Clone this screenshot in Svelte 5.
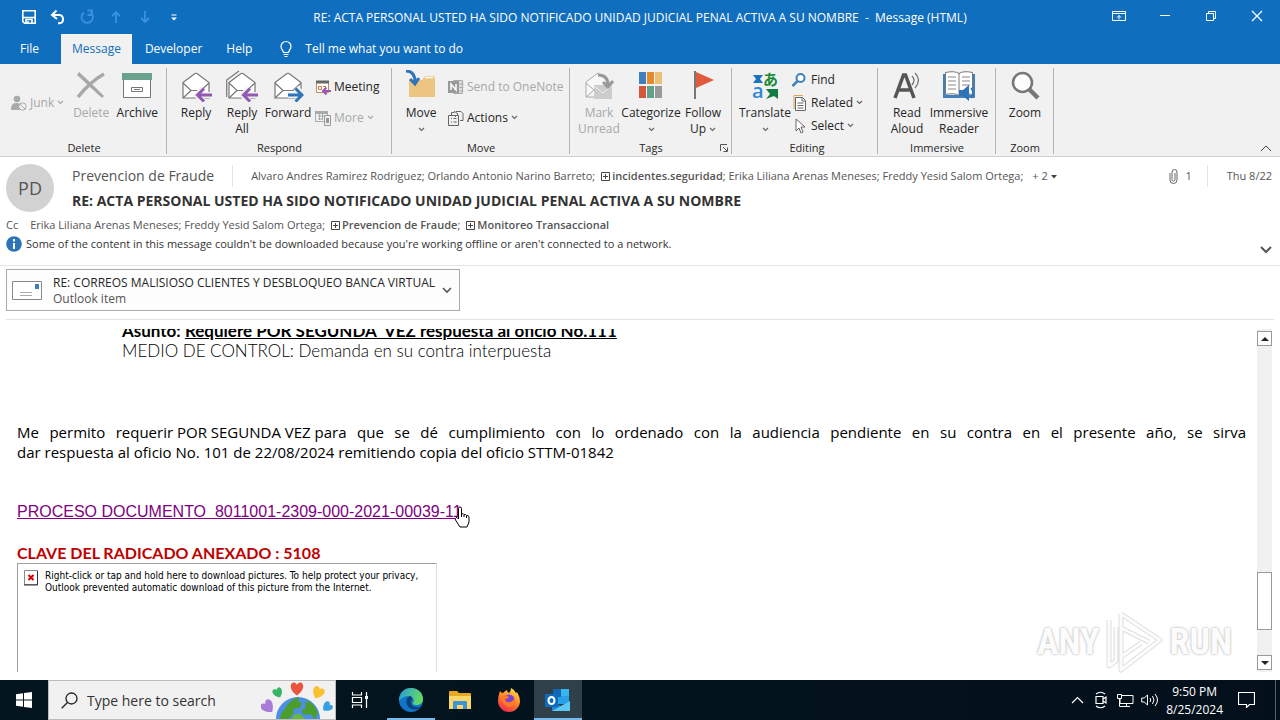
<script lang="ts">
	let search = $state('');

	const tabs = ['File', 'Message', 'Developer', 'Help'];
	let activeTab = $state('Message');
</script>

{#snippet chevron()}
	<svg class="chevron" width="7" height="5" viewBox="0 0 7 5"><path d="M1 1l2.5 2.5L6 1" fill="none" stroke="currentColor" stroke-width="1.2" /></svg>
{/snippet}

{#snippet envelope()}
	<path d="M3 12.5 15 3.500Q16 3 17 3.500L29 12.500V28H3Z" fill="#fff" stroke="#777" stroke-width="1.200" />
	<path d="M3 13l8 7.500h10l8-7.500M3 28l8-7.500" fill="none" stroke="#777" stroke-width="1.200" />
{/snippet}

{#snippet plusBox()}
	<button class="plus" aria-label="Expand list">
		<svg width="9" height="9" viewBox="0 0 9 9"><path d="M.5.5h8v8h-8zM2 4.500h5M4.500 2v5" fill="none" stroke="#444" /></svg>
	</button>
{/snippet}

<div class="window">
	<header class="titlebar">
		<div class="quick">
			<button aria-label="Save">
				<svg width="16" height="16" viewBox="0 0 16 16"><path d="M1.800 1.800h12.400v12.400H3.500L1.800 12.500zM2 8.500h12M5 14v-3.500h6V14M7 12v2" fill="none" stroke="#fff" stroke-width="1.600" /></svg>
			</button>
			<button aria-label="Undo">
				<svg width="16" height="16" viewBox="0 0 16 16"><path d="M6.500 1.500 2 6l5 4M2.500 6h7a4.200 4.200 0 0 1 0 8.300H8" fill="none" stroke="#fff" stroke-width="2" /></svg>
			</button>
			<button aria-label="Redo" disabled>
				<svg width="16" height="16" viewBox="0 0 16 16"><path d="M5 3.500A5.700 5.700 0 1 0 11.500 3.500M8.500 1.500h5M13 1v5H8.500" fill="none" stroke="#3a92dc" stroke-width="1.800" /></svg>
			</button>
			<button aria-label="Previous item" disabled>
				<svg width="16" height="16" viewBox="0 0 16 16"><path d="M8 14V3M4 7l4-4 4 4" fill="none" stroke="#3a92dc" stroke-width="1.800" /></svg>
			</button>
			<button aria-label="Next item" disabled>
				<svg width="16" height="16" viewBox="0 0 16 16"><path d="M8 2v11M4 9l4 4 4-4" fill="none" stroke="#3a92dc" stroke-width="1.800" /></svg>
			</button>
			<button aria-label="Customize toolbar">
				<svg width="16" height="16" viewBox="0 0 16 16"><path d="M5.500 6h5" stroke="#fff" /><path d="M5 8.500h6L8 11.500z" fill="#fff" /></svg>
			</button>
		</div>
		<div class="title">RE: ACTA PERSONAL USTED HA SIDO NOTIFICADO UNIDAD JUDICIAL PENAL ACTIVA A SU NOMBRE &nbsp;- &nbsp;Message (HTML)</div>
		<div class="controls">
			<button aria-label="Ribbon display options">
				<svg width="14" height="12" viewBox="0 0 14 12"><path d="M.5 1.500h13v9H.5zM.5 3.500h13M7 9.500v-4M5 7.500l2-2 2 2" fill="none" stroke="#fff" /></svg>
			</button>
			<button aria-label="Minimize">
				<svg width="12" height="12" viewBox="0 0 12 12"><path d="M1 5.500h10" stroke="#fff" /></svg>
			</button>
			<button aria-label="Restore">
				<svg width="12" height="12" viewBox="0 0 12 12"><path d="M1.500 3.500h7v7h-7zM3.500 3.500v-2h7v7h-2" fill="none" stroke="#fff" /></svg>
			</button>
			<button aria-label="Close">
				<svg width="12" height="12" viewBox="0 0 12 12"><path d="M1 1l10 10M11 1 1 11" stroke="#fff" stroke-width="1.200" /></svg>
			</button>
		</div>
	</header>

	<nav class="tabs">
		{#each tabs as tab}
			<button class:active={tab === activeTab} onclick={() => (activeTab = tab)}>{tab}</button>
		{/each}
		<button class="tell">
			<svg width="14" height="18" viewBox="0 0 14 18"><path d="M4.500 12.500c0-2-2.500-3-2.500-6a5 5 0 0 1 10 0c0 3-2.500 4-2.500 6zM4.500 14.500h5M5.500 16.500h3" fill="none" stroke="#fff" stroke-width="1.200" /></svg>
			Tell me what you want to do
		</button>
	</nav>

	<div class="ribbon">
		<section class="group delete">
			<div class="tools">
				<div class="stack">
					<button class="small" disabled>
						<svg width="16" height="16" viewBox="0 0 16 16"><circle cx="6" cy="4" r="3.300" fill="#aaa" /><path d="M0 15c0-4 1-7 5-7 2 0 3 0 4 1v6z" fill="#aaa" /><circle cx="11.500" cy="11.500" r="3.700" fill="#f1f1f1" stroke="#aaa" /><path d="m9 9 5 5" stroke="#aaa" /></svg>
						Junk {@render chevron()}
					</button>
				</div>
				<button class="large" disabled>
					<svg width="32" height="32" viewBox="0 0 32 32"><path d="M4 2c8 7 16 15 25 24l-2 2C19 21 11 13 2 5z" fill="#a8a8a8" /><path d="M29 4C20 9 11 17 3 27" fill="none" stroke="#a8a8a8" stroke-width="3.500" /></svg>
					Delete
				</button>
				<button class="large">
					<svg width="32" height="32" viewBox="0 0 32 32"><path d="M2.500 9h27v18.500h-27z" fill="#fff" stroke="#777" /><path d="M1 3h30v7H1z" fill="#6aa28d" /><path d="M10.500 17.500h11v4h-11zM13 19.500h6" fill="none" stroke="#777" /></svg>
					Archive
				</button>
			</div>
			<h2>Delete</h2>
		</section>

		<section class="group">
			<div class="tools">
				<button class="large">
					<svg width="32" height="32" viewBox="0 0 32 32">{@render envelope()}<path d="M17 25h15M23 18.500 17 25l6 6.500" fill="none" stroke="#f1f1f1" stroke-width="6" /><path d="M17 25h15M24 18.500 17.500 25l6.500 6.500" fill="none" stroke="#9258b4" stroke-width="3" /></svg>
					Reply
				</button>
				<button class="large">
					<svg width="32" height="32" viewBox="0 0 32 32"><path d="M.7 27V10L13 1" fill="none" stroke="#777" stroke-width="1.200" />{@render envelope()}<path d="M17 25h15M23 18.500 17 25l6 6.500" fill="none" stroke="#f1f1f1" stroke-width="6" /><path d="M17 25h15M24 18.500 17.500 25l6.500 6.500" fill="none" stroke="#9258b4" stroke-width="3" /></svg>
					Reply<br />All
				</button>
				<button class="large">
					<svg width="32" height="32" viewBox="0 0 32 32">{@render envelope()}<path d="M16 25h15M24 18l7 7-7 7" fill="none" stroke="#f1f1f1" stroke-width="6" /><path d="M16 25h14M23.500 18.500 30 25l-6.500 6.500" fill="none" stroke="#2f74b8" stroke-width="3" /></svg>
					Forward
				</button>
				<div class="stack">
					<button class="small">
						<svg width="16" height="16" viewBox="0 0 16 16"><path d="M1.500 2.500h12v11h-12z" fill="#fff" stroke="#c18a63" /><path d="M1 1.500h13v3H1z" fill="#666" /><path d="M3.500 7.500h3v3h-3zM8 7.500h3" fill="none" stroke="#c87941" /><path d="M8 12h8M11.500 8.500 8 12l3.500 3.500" fill="none" stroke="#9258b4" stroke-width="2" /></svg>
						Meeting
					</button>
					<button class="small" disabled>
						<svg width="16" height="16" viewBox="0 0 16 16"><path d="M.5 1.500h12v10H.5zM3 6h8M3 9h5M4.500 4v6M7.500 4v6" fill="none" stroke="#aaa" /><path d="M0 1h13v3H0z" fill="#aaa" /><path d="M9.500 5.500h6v10h-6z" fill="#eee" stroke="#999" /><path d="M11 8h3v5h-3z" fill="#999" /></svg>
						More {@render chevron()}
					</button>
				</div>
			</div>
			<h2>Respond</h2>
		</section>

		<section class="group">
			<div class="tools">
				<button class="large">
					<svg width="32" height="32" viewBox="0 0 32 32"><path d="M4 10h13l3-4h9l1 3v18H4z" fill="#ecc581" /><path d="M20 7.500h8" stroke="#fff" stroke-width="1.500" /><path d="M1 1c7 0 9 5 9 11M5 9l5 5 4-6" fill="none" stroke="#2f74b8" stroke-width="3" /></svg>
					Move<br />{@render chevron()}
				</button>
				<div class="stack">
					<button class="small" disabled>
						<svg width="16" height="16" viewBox="0 0 16 16"><path d="M5.500 1.500h9v13h-9M11.500 5h4M11.500 8.500h4M11.500 12h4" fill="#ddd" stroke="#aaa" /><path d="M0 2h11v12H0z" fill="#999" /><path d="M3 11V5l5 6V5" fill="none" stroke="#fff" stroke-width="1.500" /></svg>
						Send to OneNote
					</button>
					<button class="small">
						<svg width="16" height="16" viewBox="0 0 16 16"><path d="M.5 5.500h10v10H.500zM3 8.500h1M5.500 8.500h3M3 12h1M5.500 12h3M3.500 5V2.500h3M8 1.500h5l2 2v7h-3" fill="none" stroke="#666" /><path d="m6 1 4 3-3 3" fill="none" stroke="#666" /></svg>
						Actions {@render chevron()}
					</button>
				</div>
			</div>
			<h2>Move</h2>
		</section>

		<section class="group">
			<div class="tools">
				<button class="large" disabled>
					<svg width="32" height="32" viewBox="0 0 32 32"><path d="M3 27V12L15 3l11 9v10M3 13l8 7L3 27h9" fill="#f8f8f8" stroke="#aaa" /><path d="M11 15h18v14H11z" fill="#ccc" /><path d="m11 16 9 7 9-7" fill="none" stroke="#eee" /><path d="M15 5c7 0 10 4 10 10M20 12l5 5 5-6" fill="none" stroke="#999" stroke-width="3" /></svg>
					Mark<br />Unread
				</button>
				<button class="large wide">
					<svg width="32" height="32" viewBox="0 0 32 32"><path d="M4 2h7v12H4z" fill="#3f7fbe" /><path d="M12 2h7v12h-7z" fill="#e48a33" /><path d="M20 2h7v12h-7z" fill="#edc078" /><path d="M4 16h7v12H4z" fill="#d3573a" /><path d="M12 16h7v12h-7z" fill="#63a18b" /><path d="M20 16h7v12h-7z" fill="#999" /></svg>
					Categorize<br />{@render chevron()}
				</button>
				<button class="large">
					<svg width="32" height="32" viewBox="0 0 32 32"><path d="M8 1v28" stroke="#777" stroke-width="2" /><path d="m9 2 18 8-18 8z" fill="#e05a3d" /></svg>
					Follow<br />Up {@render chevron()}
				</button>
			</div>
			<h2>Tags</h2>
			<button class="launcher" aria-label="Message options">
				<svg width="8" height="8" viewBox="0 0 8 8"><path d="M.5 7V.5H7M3 3l4 4M7.500 3.500v4h-4" fill="none" stroke="#555" /></svg>
			</button>
		</section>

		<section class="group editing">
			<div class="tools">
				<button class="large">
					<svg class="glyphs" width="32" height="32" viewBox="0 0 32 32"><path d="M4 5h10l-3 4 3 4H4l3-4z" fill="#1b73bd" /><path d="M17 19h12v10l-4-3-8 3 4-5z" fill="#107c41" /><text x="3" y="28" font-family="Open Sans" font-size="20" font-weight="600" fill="#2b88d8">a</text><text x="14" y="15" font-family="Noto Sans CJK JP, sans-serif" font-size="15" font-weight="700" fill="#1b8a35">あ</text></svg>
					Translate<br />{@render chevron()}
				</button>
				<div class="stack">
					<button class="small">
						<svg width="16" height="16" viewBox="0 0 16 16"><circle cx="8.500" cy="6" r="4" fill="#fff" stroke="#3f7fbe" stroke-width="2" /><path d="m5.500 9-5 5" stroke="#3f7fbe" stroke-width="2.500" /></svg>
						Find
					</button>
					<button class="small">
						<svg width="16" height="16" viewBox="0 0 16 16"><path d="M2 14V.500h9" fill="none" stroke="#dca456" /><path d="M3.500 2.500h7l3 3v10h-10z" fill="#fff" stroke="#666" /><path d="M10 2.500V6h3.500M5.500 8h6M5.500 10.500h6M5.500 13h6" fill="none" stroke="#666" /></svg>
						Related {@render chevron()}
					</button>
					<button class="small">
						<svg width="16" height="16" viewBox="0 0 16 16"><path d="M4 1v12l3-3 2 5 2-1-2-5h4z" fill="#fff" stroke="#666" /></svg>
						Select {@render chevron()}
					</button>
				</div>
			</div>
			<h2>Editing</h2>
		</section>

		<section class="group">
			<div class="tools">
				<button class="large">
					<svg width="32" height="32" viewBox="0 0 32 32"><path d="M4 28 12.500 5h2L23 28M7.500 20h12" fill="none" stroke="#555" stroke-width="3.500" /><path d="M21 6q4 4 0 9M24 3q7 7 0 15" fill="none" stroke="#777" stroke-width="1.300" /></svg>
					Read<br />Aloud
				</button>
				<button class="large wide">
					<svg width="32" height="32" viewBox="0 0 32 32"><path d="M0 4h2v21h28V4h2v24H0z" fill="#3f7fbe" /><path d="M2.500 2.500q9-2 13.500 1 4.500-3 13.500-1v22q-9-2-13.500 1-4.500-3-13.500-1zM16 3v22" fill="#fff" stroke="#777" /><path d="M5 7h8M5 11h8M5 15h8M5 19h8M19 7h8M19 11h8M19 15h8" stroke="#888" /><path d="M16 20h4l6-5v16l-6-5h-4z" fill="#2f74b8" /><path d="M28 18q4 5 0 10" fill="none" stroke="#2f74b8" stroke-width="1.500" /></svg>
					Immersive<br />Reader
				</button>
			</div>
			<h2>Immersive</h2>
		</section>

		<section class="group">
			<div class="tools">
				<button class="large">
					<svg width="32" height="32" viewBox="0 0 32 32"><circle cx="13.500" cy="12.500" r="9.500" fill="#fdfdfd" stroke="#777" stroke-width="2.500" /><path d="m20 19 9 9" stroke="#777" stroke-width="4.500" /></svg>
					Zoom
				</button>
			</div>
			<h2>Zoom</h2>
		</section>

		<button class="collapse" aria-label="Collapse the ribbon">
			<svg width="12" height="7" viewBox="0 0 12 7"><path d="m1 6 5-5 5 5" fill="none" stroke="#444" /></svg>
		</button>
	</div>

	<section class="message-head">
		<div class="summary">
			<div class="avatar">PD</div>
			<div class="lines">
				<div class="from-row">
					<span class="sender">Prevencion de Fraude</span>
					<div class="recipients">
						<span>Alvaro Andres Ramirez Rodriguez; Orlando Antonio Narino Barreto;</span>
						<span>{@render plusBox()}<b>incidentes.seguridad</b>; Erika Liliana Arenas Meneses; Freddy Yesid Salom Ortega;</span>
					</div>
					<button class="more">+ 2 <svg width="6" height="4" viewBox="0 0 6 4"><path d="M0 0h6L3 3.500z" fill="#444" /></svg></button>
					<div class="attach-count">
						<svg width="9" height="15" viewBox="0 0 9 15"><path d="M6 4v6.500a1.500 1.500 0 0 1-3 0V3a2.500 2.500 0 0 1 5 0v8a3.500 3.500 0 0 1-7 0V4" fill="none" stroke="#666" /></svg>
						1
					</div>
					<time>Thu 8/22</time>
				</div>
				<h1>RE: ACTA PERSONAL USTED HA SIDO NOTIFICADO UNIDAD JUDICIAL PENAL ACTIVA A SU NOMBRE</h1>
			</div>
		</div>
		<div class="cc">
			<span class="cc-label">Cc</span>
			<span>Erika Liliana Arenas Meneses; Freddy Yesid Salom Ortega;</span>
			<span>{@render plusBox()}<b>Prevencion de Fraude</b>;</span>
			<span>{@render plusBox()}<b>Monitoreo Transaccional</b></span>
		</div>
		<div class="info">
			<svg width="16" height="16" viewBox="0 0 16 16"><circle cx="8" cy="8" r="7.800" fill="#2f74b8" /><path d="M7 7h2v6H7zM7 3h2v2.500H7z" fill="#fff" /></svg>
			<span>Some of the content in this message couldn't be downloaded because you're working offline or aren't connected to a network.</span>
			<button aria-label="Expand header">
				<svg width="12" height="8" viewBox="0 0 12 8"><path d="m1 1 5 5 5-5" fill="none" stroke="#555" stroke-width="2" /></svg>
			</button>
		</div>
	</section>

	<div class="attachments">
		<button class="attachment">
			<svg width="30" height="20" viewBox="0 0 30 20"><path d="M.5.5h29v18H.5z" fill="#fff" stroke="#888" /><path d="M23 3h4v5h-4z" fill="#3f7fbe" /><path d="M8 11.500h12M8 14.500h12" stroke="#aaa" /></svg>
			<span class="att-text">RE: CORREOS MALISIOSO CLIENTES Y DESBLOQUEO BANCA VIRTUAL<br /><span class="kind">Outlook item</span></span>
			<svg width="10" height="7" viewBox="0 0 10 7"><path d="m1 1 4 4 4-4" fill="none" stroke="#555" stroke-width="1.600" /></svg>
		</button>
	</div>

	<main class="reader">
		<article>
			<div class="reference gothic">
				<p><b>Asunto: <u>Requiere POR SEGUNDA&nbsp; VEZ respuesta al oficio No.111</u></b></p>
				<p>MEDIO DE CONTROL: Demanda en su contra interpuesta</p>
			</div>
			<div class="request">
				<p class="justified">Me permito <span>requerir POR SEGUNDA VEZ para</span> que se dé cumplimiento con lo ordenado con la audiencia pendiente en su contra en el presente año, se sirva</p>
				<p>dar respuesta al oficio No. 101 de 22/08/2024 remitiendo copia del oficio STTM-01842</p>
			</div>
			<p class="doc">
				<a href="#documento">PROCESO DOCUMENTO&nbsp; 8011001-2309-000-2021-00039-11</a>
				<svg class="pointer" width="16" height="22" viewBox="0 0 16 22"><path d="M4.500 13V2.500Q4.500 1 6 1t1.500 1.500V8q2-1 2.500.7 2-.7 2.500.8 2-.5 2.500 1.500v5l-2 5h-7l-4.500-7q-1-2 .5-2.500 1-.5 2.500 1.500M7.500 8v3M10 9v2M12.500 10v2" fill="#fff" stroke="#000" /></svg>
			</p>
			<p class="key">CLAVE DEL RADICADO ANEXADO : 5108</p>
			<div class="blocked">
				<svg width="14" height="16" viewBox="0 0 14 16"><path d="M.5.5h13v14H.500z" fill="#fff" stroke="#888" /><path d="M0 15h13.500V1" fill="none" stroke="#333" /><path d="m4.500 5 5 5m0-5-5 5" stroke="#d00" stroke-width="2" /></svg>
				<span>Right-click or tap and hold here to download pictures. To help protect your privacy, Outlook prevented automatic download of this picture from the Internet.</span>
			</div>
		</article>

		<div class="scrollbar">
			<button aria-label="Scroll up"><svg width="8" height="4" viewBox="0 0 8 4"><path d="M4 0 8 4H0z" fill="#222" /></svg></button>
			<div class="track"><div class="thumb"></div></div>
			<button aria-label="Scroll down"><svg width="8" height="4" viewBox="0 0 8 4"><path d="M0 0h8L4 4z" fill="#222" /></svg></button>
		</div>

		<div class="watermark">
			ANY
			<svg width="60" height="64" viewBox="0 0 60 64"><path d="M17 4 56 30 17 60V47L37 33M17 4v14l28 14M17 18v27M5 10v46l7-5V17" fill="none" stroke="#dedede" stroke-width="5" stroke-linejoin="round" /><path d="M17 4 56 30 17 60V47L37 33M17 4v14l28 14M17 18v27M5 10v46l7-5V17" fill="none" stroke="#fcfcfc" stroke-width="3" stroke-linejoin="round" /></svg>
			RUN
		</div>
	</main>

	<footer class="taskbar">
		<button class="start" aria-label="Start">
			<svg width="16" height="16" viewBox="0 0 16 16"><path d="M0 2.300 7 1.200v6.300H0zM8 1l8-1v7.500H8zM0 8.500h7v6.300l-7-1.100zM8 8.500h8V16l-8-1.100z" fill="#fff" /></svg>
		</button>
		<label class="search">
			<svg width="17" height="17" viewBox="0 0 17 17"><circle cx="10.500" cy="6.500" r="5.500" fill="none" stroke="#222" stroke-width="1.300" /><path d="M6.500 10.500.7 16.300" stroke="#222" stroke-width="1.300" /></svg>
			<input type="text" aria-label="Search" placeholder="Type here to search" bind:value={search} />
			<svg class="earth" width="72" height="38" viewBox="0 0 72 38">
				<defs>
					<path id="heart" d="M0 5C-7 0-5-5-2.500-5 -1-5 0-3.500 0-3 0-3.500 1-5 2.500-5 5-5 7 0 0 5z" />
				</defs>
				<circle cx="37" cy="38" r="22" fill="#4d8fe8" />
				<path d="M23 29q6-11 15-13-2 5 3 6l-2 5-7 1 1 4-5 6h-9q0-5 4-9zM42 17q11 4 15 15l-3 6-5-5-6 1-3-5 5-2-1-5 4-1z" fill="#4b9e2c" />
				<path d="M31 38q2-6 8-5l5 5z" fill="#6bb936" />
				<use href="#heart" transform="translate(36 8) scale(1.300)" fill="#e8563f" />
				<use href="#heart" transform="translate(17 12) rotate(-25)" fill="#37b565" />
				<use href="#heart" transform="translate(57 12) rotate(25) scale(1.200)" fill="#fbc02e" />
				<use href="#heart" transform="translate(7 26) rotate(-40) scale(1.300)" fill="#a97bd8" />
				<use href="#heart" transform="translate(66 26) rotate(50)" fill="#38a0e2" />
			</svg>
		</label>
		<button class="app task-view" aria-label="Task view">
			<svg width="18" height="18" viewBox="0 0 18 18"><path d="M1.500 1v3h9V1M1.500 17v-3h9v3M1.500 6.500h9v5h-9zM15.500 1v16" fill="none" stroke="#fff" stroke-width="1.200" /><path d="M14 5h3v3h-3z" fill="#fff" /></svg>
		</button>
		<button class="app open" aria-label="Edge">
			<svg width="26" height="26" viewBox="0 0 26 26">
				<defs>
					<linearGradient id="edge" x1="0" y1="0" x2="1" y2=".3"><stop offset="0" stop-color="#229be0" /><stop offset="1" stop-color="#65d864" /></linearGradient>
				</defs>
				<circle cx="13" cy="13" r="12" fill="#1174c8" />
				<path d="M1 12C2 4 8 1 13 1c8 0 12 6 12 11 0 4-3 6-7 6-2 0-4-1-3-2 2-3 0-7-4-7-4 0-8 2-10 5z" fill="url(#edge)" />
				<path d="M12 9c-5 2-5 11 2 13 4 1 8 0 9-3-3 2-9 2-10-3-.3-2 .5-2.500 1-3.500.5-1.500-.5-3-2-3.500z" fill="#0c3f78" />
			</svg>
		</button>
		<button class="app" aria-label="File Explorer">
			<svg width="22" height="20" viewBox="0 0 22 20"><path d="M0 2q0-1 1-1h7l2 2h11q1 0 1 1v14H0z" fill="#e8a922" /><path d="M0 6h22v13H0z" fill="#fcd667" /><path d="M4 19v-7q0-1 1-1h12q1 0 1 1v7h-4v-4H8v4z" fill="#3d93d8" /></svg>
		</button>
		<button class="app" aria-label="Firefox">
			<svg width="24" height="24" viewBox="0 0 24 24">
				<defs>
					<linearGradient id="fox" x1=".8" y1="0" x2=".3" y2="1"><stop offset="0" stop-color="#ffe14a" /><stop offset=".5" stop-color="#ff8425" /><stop offset="1" stop-color="#ee2950" /></linearGradient>
				</defs>
				<path d="M3 3q1 2 3 2 2-2 4-3 0 2 2 3 2-2 2-5 3 1 5 5l1-1q3 5 3 9a11 11 0 0 1-22 0Q1 8 3 3z" fill="url(#fox)" />
				<circle cx="12" cy="12" r="5.500" fill="#7a45d0" />
				<path d="M4 8q5-2 8 1-1 2-4 2 1 4 5 3 4-1 4-4 4 8-4 9-8-1-9-11z" fill="#ff7a25" />
			</svg>
		</button>
		<button class="app open active" aria-label="Outlook">
			<svg width="26" height="24" viewBox="0 0 26 24"><path d="M8 1h16v15H8z" fill="#28a0e6" /><path d="M8 1h8v8H8z" fill="#1066b5" /><path d="M16 1h8v7h-8z" fill="#35b8f1" /><path d="m7 14 9 4 9-5v10H7z" fill="#1b87d8" /><path d="m7 23 18-10v10z" fill="#5bc8f5" /><path d="M0 6h13v13H0z" fill="#0f6cbd" /><ellipse cx="6.500" cy="12.500" rx="3" ry="3.500" fill="none" stroke="#fff" stroke-width="2" /></svg>
		</button>
		<div class="tray">
			<button aria-label="Hidden icons"><svg width="13" height="8" viewBox="0 0 13 8"><path d="m1 7 5.500-5.500L12 7" fill="none" stroke="#fff" stroke-width="1.200" /></svg></button>
			<button aria-label="Meet now"><svg width="14" height="18" viewBox="0 0 14 18"><path d="M2 5.500h7v7H2zM9 8l3-2v6l-3-2M2 3q4.500-3.500 9 0M2 15q4.500 3.500 9 0" fill="none" stroke="#fff" stroke-width="1.200" /></svg></button>
			<button aria-label="Network"><svg width="17" height="15" viewBox="0 0 17 15"><path d="M5 2.500h11v8H3V6M9.500 10.500v3M6 13.500h7M.5 1.500h4v4h-4zM2.500 5.500v8H6" fill="none" stroke="#fff" /></svg></button>
			<button aria-label="Volume"><svg width="17" height="14" viewBox="0 0 17 14"><path d="M.7 5h2.500L6.500 2v10L3.200 9H.7zM9 5q1.500 2 0 4M11.500 3q3 4 0 8M14 1q5 6 0 12" fill="none" stroke="#fff" /></svg></button>
		</div>
		<div class="clock">9:50 PM<br />8/25/2024</div>
		<button class="notify" aria-label="Notifications">
			<svg width="17" height="16" viewBox="0 0 17 16"><path d="M.5.5h16v12h-5l-3 3v-3h-8z" fill="none" stroke="#fff" stroke-width="1.200" /></svg>
		</button>
	</footer>
</div>

<style>
	:global(body) {
		margin: 0;
	}

	.window {
		display: flex;
		flex-direction: column;
		height: 100vh;
		overflow: hidden;
		background: #fff;
		color: #262626;
		font-family: 'Open Sans', 'Noto Sans', sans-serif;
		font-size: 12px;
		line-height: 16px;
	}

	h1,
	h2,
	p {
		margin: 0;
	}

	button {
		padding: 0;
		border: 0;
		background: none;
		color: inherit;
		font: inherit;
	}

	svg {
		flex: none;
	}

	.titlebar {
		display: flex;
		align-items: center;
		height: 34px;
		background: #106ebe;
		color: #fff;
	}

	.quick {
		display: flex;
		gap: 13px;
		padding-left: 21px;
		width: 184px;
		box-sizing: border-box;
	}

	.quick svg {
		display: block;
	}

	.title {
		flex: 1;
		padding-top: 2px;
		text-align: center;
		white-space: nowrap;
	}

	.controls {
		display: flex;
		padding-bottom: 4px;
	}

	.controls button {
		width: 46px;
	}

	.controls svg {
		vertical-align: middle;
	}

	.tabs {
		display: flex;
		height: 30px;
		background: #106ebe;
		color: #fff;
	}

	.tabs button {
		padding: 0 11px;
	}

	.tabs button:first-child {
		padding: 0 22px 0 20px;
	}

	.tabs button:nth-child(3) {
		padding: 0 13px;
	}

	.tabs .active {
		background: #f1f1f1;
		color: #106ebe;
	}

	.tabs .tell {
		display: flex;
		align-items: center;
		gap: 12px;
		padding: 0 16px;
	}

	.ribbon {
		display: grid;
		grid-template-columns: 167px 225px 178px 162px 146px 118px 58px 1fr;
		box-sizing: border-box;
		height: 93px;
		padding-top: 4px;
		background: #f1f1f1;
		border-bottom: 1px solid #d0d0d0;
	}

	.group {
		position: relative;
		box-sizing: border-box;
		height: 86px;
		padding: 0 5px 0 6px;
		border-right: 1px solid #b4b4b4;
	}

	.group.delete {
		padding-left: 7px;
	}

	.group.editing {
		padding-left: 10px;
	}

	.tools {
		display: flex;
		height: 69px;
	}

	.group h2 {
		padding-top: 3px;
		text-align: center;
		font-size: 11px;
		font-weight: 400;
	}

	/* labels may run slightly past the icon column */
	.large {
		align-self: flex-start;
		flex: none;
		width: 54px;
		margin: 0 -4px;
		text-align: center;
		white-space: nowrap;
	}

	.large svg:first-child {
		display: block;
		margin: 2px auto 3px;
	}

	.wide {
		width: 66px;
	}

	.glyphs {
		overflow: visible;
	}

	.stack {
		display: flex;
		flex-direction: column;
		justify-content: space-evenly;
		align-items: flex-start;
		padding: 0 4px;
	}

	.small {
		display: flex;
		align-items: center;
		gap: 3px;
		height: 23px;
		white-space: nowrap;
	}

	button:disabled {
		color: #a8a8a8;
	}

	.chevron {
		vertical-align: middle;
		color: #666;
	}

	button:disabled .chevron {
		color: #a8a8a8;
	}

	.launcher {
		position: absolute;
		right: 3px;
		bottom: -2px;
	}

	.collapse {
		justify-self: end;
		align-self: end;
		padding-right: 8px;
	}

	.message-head {
		padding: 6px 6px 10px;
		border-bottom: 1px solid #e4e4e4;
		color: #555;
		font-size: 11px;
	}

	.summary {
		display: flex;
		gap: 18px;
	}

	.avatar {
		width: 48px;
		height: 48px;
		margin-top: 1px;
		border-radius: 50%;
		background: #d2d2d2;
		font-size: 18px;
		line-height: 48px;
		text-align: center;
	}

	.lines {
		flex: 1;
	}

	.from-row {
		display: flex;
		align-items: center;
		height: 26px;
		white-space: nowrap;
	}

	.sender {
		padding-right: 18px;
		border-right: 1px solid #e4e4e4;
		font-size: 14px;
		line-height: 22px;
	}

	.recipients {
		display: flex;
		gap: 6px;
		padding: 0 9px 0 18px;
	}

	b {
		font-weight: 600;
	}

	.plus {
		margin-right: 2px;
	}

	.plus svg {
		vertical-align: -1px;
	}

	.more svg {
		vertical-align: middle;
	}

	.attach-count {
		display: flex;
		align-items: center;
		gap: 7px;
		margin-left: auto;
		padding-right: 15px;
		border-right: 1px solid #e4e4e4;
		line-height: 22px;
	}

	time {
		padding: 0 2px 0 19px;
	}

	h1 {
		color: #333;
		font-size: 14px;
		font-weight: 700;
		line-height: 24px;
	}

	.cc {
		display: flex;
		gap: 6px;
		padding-top: 4px;
	}

	.cc-label {
		margin-right: 6px;
	}

	.info {
		display: flex;
		align-items: center;
		gap: 4px;
		height: 22px;
		color: #333;
	}

	.info button {
		margin: 12px 2px 0 auto;
	}

	.attachments {
		margin: 0 6px;
		padding: 3px 0 8px;
		border-bottom: 1px solid #e4e4e4;
	}

	.attachment {
		display: flex;
		align-items: center;
		gap: 11px;
		height: 42px;
		padding: 1px 7px 0 5px;
		border: 1px solid #ababab;
		background: #fdfdfd;
		text-align: left;
	}

	.att-text {
		margin-right: -4px;
	}

	.kind {
		color: #555;
	}

	.reader {
		position: relative;
		display: flex;
		flex: 1;
		gap: 11px;
		min-height: 0;
		padding: 9px 8px 8px 17px;
	}

	article {
		flex: 1;
		overflow: hidden;
		color: #000;
		font-size: 15px;
		line-height: 20px;
	}

	.gothic {
		font-family: Lato, sans-serif;
		font-size: 17px;
		font-weight: 300;
	}

	.reference {
		margin-top: -8px;
		padding-left: 105px;
	}

	.gothic b {
		font-weight: 700;
	}

	.request {
		margin-top: 61px;
	}

	.justified {
		text-align-last: justify;
	}

	.justified span {
		display: inline-block;
		text-align-last: left;
	}

	.doc {
		position: relative;
		margin-top: 40px;
		font-family: 'Liberation Sans', sans-serif;
		font-size: 16px;
	}

	.doc a {
		color: #800080;
	}

	.pointer {
		position: absolute;
		left: 437px;
		top: 4px;
	}

	.key {
		margin-top: 21px;
		color: #c00000;
		font-family: Lato, sans-serif;
		font-size: 16px;
		font-weight: 700;
	}

	.blocked {
		display: flex;
		align-items: flex-start;
		gap: 7px;
		box-sizing: border-box;
		width: 420px;
		height: 200px;
		padding: 6px;
		border: 1px solid #a0a0a0;
		border-right-color: #ddd;
		font-family: 'DejaVu Sans Condensed', 'DejaVu Sans', sans-serif;
		font-size: 10px;
		line-height: 12px;
	}

	.scrollbar {
		display: flex;
		flex-direction: column;
		width: 15px;
		padding: 2px 0;
		background: #f1f1f1;
	}

	.scrollbar button {
		display: grid;
		place-items: center;
		height: 15px;
		border: 1px solid #999;
		background: #fff;
	}

	.track {
		display: flex;
		flex-direction: column;
		justify-content: flex-end;
		flex: 1;
		padding-bottom: 25px;
	}

	.thumb {
		height: 56px;
		border: 1px solid #999;
		background: #fff;
	}

	.watermark {
		position: absolute;
		right: 48px;
		bottom: 6px;
		display: flex;
		align-items: center;
		gap: 5px;
		color: #fcfcfc;
		font-family: 'Liberation Sans Narrow', 'Roboto Condensed', sans-serif;
		font-size: 36px;
		font-weight: 700;
		text-shadow: 0 0 2px #bbb, 0 0 3px #ccc;
	}

	.taskbar {
		display: flex;
		align-items: center;
		height: 40px;
		background: linear-gradient(90deg, #03161f, #03101c);
		color: #fff;
	}

	.start {
		display: grid;
		place-items: center;
		width: 48px;
		height: 40px;
	}

	.search {
		display: flex;
		align-items: center;
		box-sizing: border-box;
		width: 288px;
		height: 40px;
		padding: 0 2px 0 12px;
		border: 1px solid #bbb;
		background: #f1f1f1;
	}

	.search input {
		flex: 1;
		min-width: 0;
		padding: 0 0 0 9px;
		border: 0;
		outline: 0;
		background: none;
		color: #222;
		font-family: inherit;
		font-size: 14px;
	}

	.search input::placeholder {
		color: #333;
		opacity: 1;
	}

	.app {
		display: grid;
		place-items: center;
		box-sizing: border-box;
		width: 48px;
		height: 40px;
		margin-right: 1px;
		border-top: 2px solid transparent;
		border-bottom: 2px solid transparent;
	}

	.task-view {
		margin-right: 3px;
	}

	.app.open {
		border-bottom-color: #76b9ed;
	}

	.app.active {
		background-color: #2f4049;
	}

	.tray {
		display: flex;
		align-items: center;
		gap: 8px;
		margin-left: auto;
	}

	.tray button {
		display: grid;
		place-items: center;
		width: 16px;
	}

	.clock {
		padding: 2px 15px 0 9px;
		text-align: center;
		line-height: 18px;
	}

	.notify {
		display: grid;
		place-items: center;
		height: 40px;
		margin-right: 4px;
		padding-right: 20px;
		border-right: 1px solid #55606a;
	}
</style>
